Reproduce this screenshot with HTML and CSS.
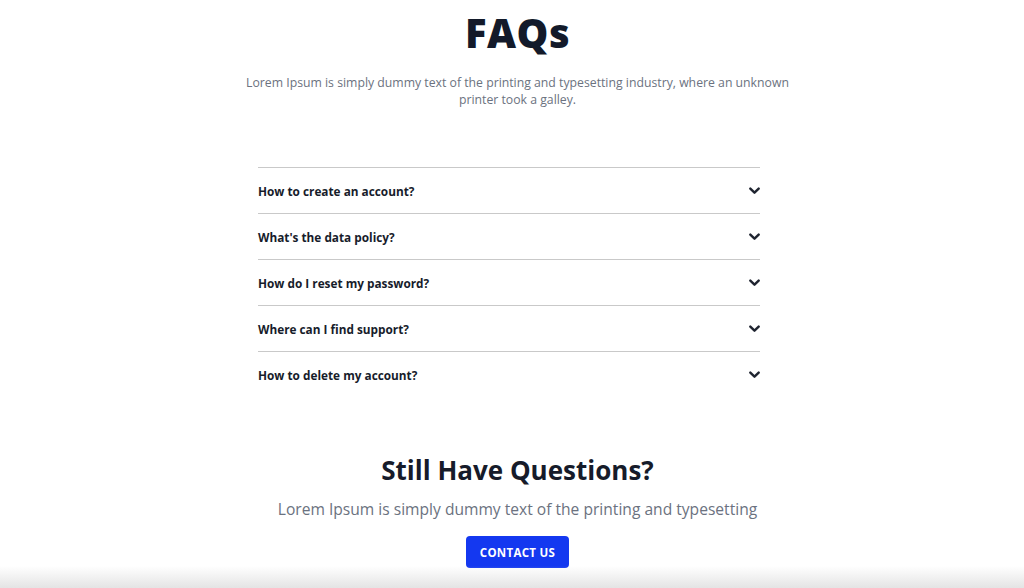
FILE: index.html
```html
<!DOCTYPE html>
<html lang="en">
<head>
<meta charset="utf-8">
<title>FAQs</title>
<link rel="stylesheet" href="styles.css">
</head>
<body>
<main class="page">
  <section class="faq-head">
    <h1 class="title">FAQs</h1>
    <p class="lead">Lorem Ipsum is simply dummy text of the printing and typesetting industry, where an unknown printer took a galley.</p>
  </section>
  <ul class="faq-list">
    <li class="faq-item"><span>How to create an account?</span><svg class="chev" viewBox="0 0 10 7"><path d="M1.2 1.3 L5 5 L8.8 1.3"/></svg></li>
    <li class="faq-item"><span>What's the data policy?</span><svg class="chev" viewBox="0 0 10 7"><path d="M1.2 1.3 L5 5 L8.8 1.3"/></svg></li>
    <li class="faq-item"><span>How do I reset my password?</span><svg class="chev" viewBox="0 0 10 7"><path d="M1.2 1.3 L5 5 L8.8 1.3"/></svg></li>
    <li class="faq-item"><span>Where can I find support?</span><svg class="chev" viewBox="0 0 10 7"><path d="M1.2 1.3 L5 5 L8.8 1.3"/></svg></li>
    <li class="faq-item"><span>How to delete my account?</span><svg class="chev" viewBox="0 0 10 7"><path d="M1.2 1.3 L5 5 L8.8 1.3"/></svg></li>
  </ul>
  <section class="cta">
    <h2 class="cta-title">Still Have Questions?</h2>
    <p class="cta-text">Lorem Ipsum is simply dummy text of the printing and typesetting</p>
    <a class="cta-btn" href="#">CONTACT US</a>
  </section>
</main>
<div class="fade"></div>
</body>
</html>
```
FILE: styles.css
```css
* { box-sizing: border-box; }
html, body { margin: 0; padding: 0; }
body {
  background: #ffffff;
  font-family: "Open Sans", "DejaVu Sans", sans-serif;
  color: #141a2b;
  height: 588px;
  overflow: hidden;
  position: relative;
}
.page {
  display: flex;
  flex-direction: column;
  align-items: center;
  padding-left: 11px;
}
.faq-head {
  display: flex;
  flex-direction: column;
  align-items: center;
  padding-top: 8px;
}
.title {
  margin: 0;
  font-size: 40px;
  line-height: 50px;
  font-weight: 800;
  color: #131a2a;
  letter-spacing: 0.5px;
}
.lead {
  margin: 16px 0 0;
  width: 570px;
  text-align: center;
  font-size: 12.25px;
  line-height: 17px;
  color: #6b7280;
}
.faq-list {
  list-style: none;
  margin: 59px 17px 0 0;
  padding: 0;
  width: 502px;
}
.faq-item {
  display: flex;
  align-items: center;
  justify-content: space-between;
  height: 46px;
  border-top: 1px solid #c9c9c9;
  font-size: 11.8px;
  font-weight: 700;
  color: #171c2b;
}
.chev {
  width: 11px;
  height: 8px;
}
.chev path {
  fill: none;
  stroke: #1f2430;
  stroke-width: 2.2;
  stroke-linecap: round;
  stroke-linejoin: round;
}
.cta {
  display: flex;
  flex-direction: column;
  align-items: center;
  margin-top: 56px;
}
.cta-title {
  margin: 0;
  font-size: 26px;
  line-height: 34px;
  font-weight: 700;
  color: #161b2a;
}
.cta-text {
  margin: 12px 0 0;
  font-size: 15.6px;
  line-height: 20px;
  color: #6b7280;
}
.cta-btn {
  margin-top: 17px;
  display: inline-flex;
  align-items: center;
  justify-content: center;
  width: 103px;
  height: 32px;
  border-radius: 4px;
  background: #1438f0;
  color: #ffffff;
  font-size: 11.5px;
  letter-spacing: 0.3px;
  font-weight: 700;
  text-decoration: none;
}
.fade {
  position: absolute;
  left: 0;
  right: 0;
  bottom: 0;
  height: 22px;
  background: linear-gradient(to bottom, rgba(255,255,255,0), #e4e4e4);
  pointer-events: none;
}
```
